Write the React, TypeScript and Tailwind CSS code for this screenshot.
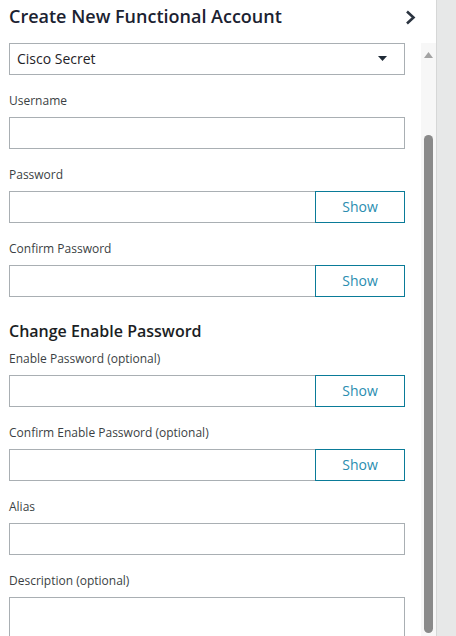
import React from 'react';

const Label: React.FC<{ text: string }> = ({ text }) => (
  <div className="mb-[8px] text-[12px] leading-[16px] text-[#3b3f44]">{text}</div>
);

const TextField: React.FC<{ label: string }> = ({ label }) => (
  <div className="mt-[18px]">
    <Label text={label} />
    <input
      type="text"
      className="block h-[32px] w-full border border-[#a9afb3] bg-white px-2 text-[14px] outline-none"
    />
  </div>
);

const PasswordField: React.FC<{ label: string }> = ({ label }) => (
  <div className="mt-[18px]">
    <Label text={label} />
    <div className="flex h-[32px]">
      <input
        type="password"
        className="block h-full min-w-0 flex-1 border border-[#a9afb3] bg-white px-2 text-[14px] outline-none"
      />
      <button
        type="button"
        className="relative -ml-px h-full w-[90px] border border-[#0a7b98] bg-white pb-px text-[14px] text-[#2a8db0]"
      >
        Show
      </button>
    </div>
  </div>
);

const App: React.FC = () => {
  return (
    <div className="flex h-[636px] w-[456px] overflow-hidden bg-white font-['Open_Sans',sans-serif]">
      <div className="flex w-[436px] flex-col">
        {/* Header */}
        <div className="flex h-[43px] shrink-0 items-start justify-between pl-[9px] pr-[20px]">
          <h1 className="pt-[4px] text-[18px] font-semibold leading-[24px] text-[#1b2231]">
            Create New Functional Account
          </h1>
          <svg className="mt-[10px]" width="11" height="15" viewBox="0 0 11 15" fill="none">
            <path d="M2 1.5 L8.5 7.5 L2 13.5" stroke="#2b3440" strokeWidth="2.6" />
          </svg>
        </div>

        <div className="flex min-h-0 flex-1">
          {/* Form */}
          <div className="w-[421px] overflow-hidden pl-[9px] pr-[16px]">
            <div className="flex h-[32px] items-center justify-between border border-[#a9afb3] pb-px pl-[7px] pr-[17px]">
              <span className="text-[14px] text-[#1f2328]">Cisco Secret</span>
              <svg width="9" height="5" viewBox="0 0 9 5">
                <path d="M0 0 H9 L4.5 5 Z" fill="#1f2a36" />
              </svg>
            </div>

            <TextField label="Username" />
            <PasswordField label="Password" />
            <PasswordField label="Confirm Password" />

            <h2 className="mt-[23px] text-[16px] font-semibold leading-[22px] text-[#1b1e24]">
              Change Enable Password
            </h2>
            <div className="-mt-[9px]">
              <PasswordField label="Enable Password (optional)" />
            </div>
            <PasswordField label="Confirm Enable Password (optional)" />
            <TextField label="Alias" />

            <div className="mt-[18px]">
              <Label text="Description (optional)" />
              <textarea className="block h-[70px] w-full resize-none border border-[#a9afb3] bg-white outline-none" />
            </div>
          </div>

          {/* Scrollbar */}
          <div className="flex w-[15px] flex-col items-center bg-[#f7f7f7]">
            <svg className="mt-[9px]" width="9" height="6" viewBox="0 0 9 6">
              <path d="M4.5 0 L9 6 H0 Z" fill="#a3a3a3" />
            </svg>
            <div className="mt-[77px] h-[498px] w-[9px] rounded-full bg-[#8a8a8a]" />
          </div>
        </div>
      </div>
      <div className="flex-1 border-l border-[#d6d7d7] bg-[#e7e8e8]" />
    </div>
  );
};

export default App;
